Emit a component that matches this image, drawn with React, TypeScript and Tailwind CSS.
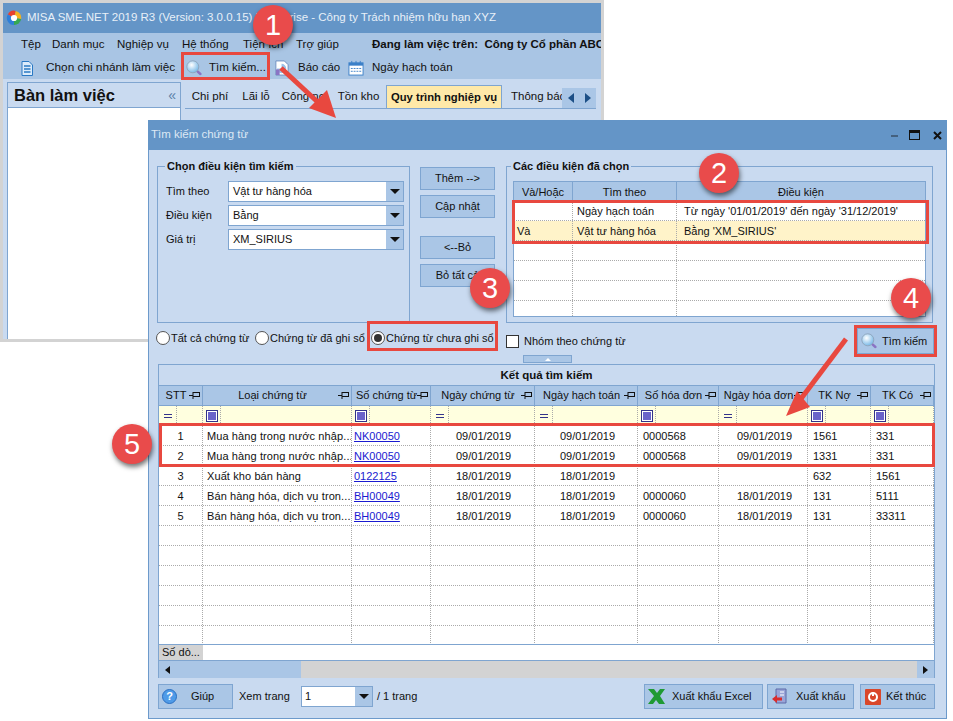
import { ReactNode } from 'react';

const font = 'font-["Liberation_Sans",sans-serif]';

const SearchIcon = ({ size = 20 }: { size?: number }) => (
  <svg width={size} height={size} viewBox="0 0 20 20" className="shrink-0">
    <defs>
      <radialGradient id="lens" cx="0.4" cy="0.35" r="0.7">
        <stop offset="0" stopColor="#ffffff" />
        <stop offset="1" stopColor="#6fb4e6" />
      </radialGradient>
    </defs>
    <path d="M13 13l5 4.500" stroke="#8a74c4" strokeWidth="3" strokeLinecap="round" />
    <circle cx="8.500" cy="8.500" r="7.500" fill="url(#lens)" stroke="#8fa6bd" strokeWidth="1.200" />
  </svg>
);

const Pin = () => (
  <svg width="11" height="9" viewBox="0 0 11 9" className="shrink-0">
    <path d="M0 4.500h4M4 1v7M4 1.500h6.500M4 5.500h6.500M10.500 1v5" stroke="#111" strokeWidth="1" fill="none" />
  </svg>
);

const Caret = () => (
  <svg width="10" height="5" viewBox="0 0 10 5">
    <path d="M0 0h10L5 5z" fill="#111" />
  </svg>
);

const Combo = ({ value }: { value: string }) => (
  <div className="flex h-[21px] w-[176px] border border-[#7fa5d0] bg-white">
    <div className="flex-1 pl-[4px] leading-[18px] text-[#111]">{value}</div>
    <div className="flex w-[17px] items-center justify-center bg-[#aac6e6]">
      <Caret />
    </div>
  </div>
);

const Btn = ({ children, className = '' }: { children: ReactNode; className?: string }) => (
  <div className={`flex items-center justify-center border border-[#7ea5d1] bg-[#aac6e6] text-[#111] ${className}`}>
    {children}
  </div>
);

const Radio = ({ label, checked = false, className }: { label: string; checked?: boolean; className: string }) => (
  <div className={`flex items-center gap-[1px] whitespace-nowrap text-[#111] ${className}`}>
    <span className="flex h-[14px] w-[14px] items-center justify-center rounded-full border border-[#555] bg-white">
      {checked && <span className="h-[8px] w-[8px] rounded-full bg-[#333]" />}
    </span>
    {label}
  </div>
);

const condCols = ['w-[59px]', 'w-[104px]', 'flex-1'];
const condRows = [
  ['', 'Ngày hạch toán', "Từ ngày '01/01/2019' đến ngày '31/12/2019'"],
  ['Và', 'Vật tư hàng hóa', "Bằng 'XM_SIRIUS'"],
  ['', '', ''],
  ['', '', ''],
  ['', '', ''],
  ['', '', ''],
];

const cols = [
  { w: 'w-[44px]', label: 'STT', align: 'text-center' },
  { w: 'w-[149px]', label: 'Loại chứng từ', align: 'pl-[4px] tracking-[0.1px]' },
  { w: 'w-[79px]', label: 'Số chứng từ', align: 'pl-[2px]' },
  { w: 'w-[104px]', label: 'Ngày chứng từ', align: 'pl-[25px]' },
  { w: 'w-[103px]', label: 'Ngày hạch toán', align: 'pl-[25px]' },
  { w: 'w-[81px]', label: 'Số hóa đơn', align: 'pl-[5px]' },
  { w: 'w-[89px]', label: 'Ngày hóa đơn', align: 'pl-[18px]' },
  { w: 'w-[63px]', label: 'TK Nợ', align: 'pl-[5px]' },
  { w: 'w-[63px]', label: 'TK Có', align: 'pl-[5px]' },
];

const filters = ['eq', 'box', 'box', 'eq', 'eq', 'box', 'eq', 'box', 'box'];

const rows = [
  ['1', 'Mua hàng trong nước nhập...', 'NK00050', '09/01/2019', '09/01/2019', '0000568', '09/01/2019', '1561', '331'],
  ['2', 'Mua hàng trong nước nhập...', 'NK00050', '09/01/2019', '09/01/2019', '0000568', '09/01/2019', '1331', '331'],
  ['3', 'Xuất kho bán hàng', '0122125', '18/01/2019', '18/01/2019', '', '', '632', '1561'],
  ['4', 'Bán hàng hóa, dịch vụ tron...', 'BH00049', '18/01/2019', '18/01/2019', '0000060', '18/01/2019', '131', '5111'],
  ['5', 'Bán hàng hóa, dịch vụ tron...', 'BH00049', '18/01/2019', '18/01/2019', '0000060', '18/01/2019', '131', '33311'],
  ...Array.from({ length: 6 }, () => ['', '', '', '', '', '', '', '', '']),
];

const Badge = ({ n, className }: { n: number; className: string }) => (
  <div
    className={`absolute flex h-[40px] w-[40px] items-center justify-center rounded-full bg-[#e94b4b] text-[29px] leading-none text-white shadow-[1px_3px_5px_rgba(0,0,0,0.55)] ${className}`}
  >
    {n}
  </div>
);

const RedBox = ({ className }: { className: string }) => (
  <div className={`absolute border-[3px] border-[#e8483f] ${className}`} />
);

const MainWindow = () => (
  <div className="absolute top-0 left-0 h-[342px] w-[604px] border-[3px] border-[#d3d3d3] bg-[#c9daf0] text-[11.5px]">
    <div className="flex h-[30px] items-center gap-[5px] bg-[#6495c7] pl-[3px] text-[11.5px] text-[#e8f0f8]">
      <svg width="16" height="16" viewBox="0 0 18 18">
        <path d="M9 9L2 5a8 8 0 0 1 9-4z" fill="#e8402e" />
        <path d="M9 9l2-8a8 8 0 0 1 6 9z" fill="#f4b31f" />
        <path d="M9 9l8 1a8 8 0 0 1-8 7z" fill="#35a853" />
        <path d="M9 9v8A8 8 0 0 1 2 5z" fill="#2f7fd8" />
        <circle cx="9" cy="9" r="3.500" fill="#fff" />
      </svg>
      <span className="whitespace-nowrap">MISA SME.NET 2019 R3 (Version: 3.0.0.15) Enterprise - Công ty Trách nhiệm hữu hạn XYZ</span>
    </div>
    <div className="h-[46px] bg-[#a9c5e4] text-[#111]">
      <div className="flex h-[24px] items-center overflow-hidden whitespace-nowrap pl-[18px]">
        <span className="w-[31px] shrink-0">Tệp</span>
        <span className="w-[65px] shrink-0">Danh mục</span>
        <span className="w-[65px] shrink-0">Nghiệp vụ</span>
        <span className="w-[61px] shrink-0">Hệ thống</span>
        <span className="w-[53px] shrink-0">Tiện ích</span>
        <span className="w-[76px] shrink-0">Trợ giúp</span>
        <span className="font-bold">Đang làm việc trên:&nbsp; Công ty Cổ phần ABC</span>
      </div>
      <div className="flex h-[22px] items-center whitespace-nowrap pl-[18px]">
        <svg width="12" height="15" viewBox="0 0 12 15" className="mr-[13px] shrink-0">
          <path d="M1 .5h7l3.500 3.500v10.500H1z" fill="#dcecfb" stroke="#2a79c4" />
          <path d="M3 5h6.500M3 8h6.500M3 11h6.500" stroke="#2a79c4" strokeWidth="1.500" />
        </svg>
        <span className="w-[140px] shrink-0 text-[11.8px]">Chọn chi nhánh làm việc</span>
        <SearchIcon size={16} />
        <span className="ml-[7px] w-[65px] shrink-0">Tìm kiếm...</span>
        <svg width="16" height="16" viewBox="0 0 17 17" className="mr-[8px] shrink-0">
          <path d="M2 1h9l4 4v11H2z" fill="#fff" stroke="#6f8fc0" />
          <path d="M8 9V4a5 5 0 1 1-5 5z" fill="#9cc4ea" />
          <path d="M2 10h4v6H2z" fill="#8a74c4" />
        </svg>
        <span className="w-[50px] shrink-0">Báo cáo</span>
        <svg width="16" height="16" viewBox="0 0 17 17" className="mr-[8px] shrink-0">
          <rect x="1" y="3" width="15" height="13" fill="#fff" stroke="#3c80c8" />
          <rect x="1" y="3" width="15" height="3" fill="#3c80c8" />
          <path d="M4 1v4M8.500 1v4M13 1v4" stroke="#3c80c8" />
          <path d="M3 9h11M3 12h11" stroke="#3c80c8" strokeDasharray="2 1" />
        </svg>
        <span>Ngày hạch toán</span>
      </div>
    </div>
    <div className="flex pt-[3px] pl-[4px]">
      <div className="h-[257px] w-[174px] border border-b-0 border-[#7fa5d0] bg-white">
        <div className="flex h-[25px] items-center justify-between border-b border-[#7fa5d0] bg-[#c9daf0] pr-[4px] pl-[6px] text-[16.500px] font-bold text-[#111]">
          Bàn làm việc
          <span className="text-[14px] font-normal text-[#5b7fa8]">«</span>
        </div>
      </div>
      <div className="ml-[4px] pt-[3px]">
        <div className="flex h-[24px] w-[411px] items-stretch border-b border-[#7fa5d0] text-[#111]">
          <span className="flex w-[50px] items-center justify-center">Chi phí</span>
          <span className="flex w-[42px] items-center justify-center">Lãi lỗ</span>
          <span className="flex w-[54px] items-center justify-center">Công nợ</span>
          <span className="flex w-[55px] items-center justify-center">Tồn kho</span>
          <span className="-mb-px flex w-[116px] items-center justify-center border border-[#7fa5d0] bg-[#ffe9a8] text-[11.250px] font-bold whitespace-nowrap">
            Quy trình nghiệp vụ
          </span>
          <span className="flex flex-1 items-center overflow-hidden pl-[9px] whitespace-nowrap">Thông báo</span>
          <span className="flex h-[20px] w-[34px] items-center justify-around self-end bg-[#aac6e6]">
            <svg width="6" height="10" viewBox="0 0 6 10"><path d="M6 0v10L0 5z" fill="#1c4f86" /></svg>
            <svg width="6" height="10" viewBox="0 0 6 10"><path d="M0 0v10l6-5z" fill="#1c4f86" /></svg>
          </span>
        </div>
      </div>
    </div>
  </div>
);

const SearchDialog = () => (
  <div className="absolute top-[120px] left-[148px] flex h-[599px] w-[799px] flex-col border border-[#6d9acb] bg-[#c9daf0] text-[11px] text-[#111]">
    <div className="-mx-px -mt-px flex h-[30px] shrink-0 items-center bg-[#6495c7] pl-[3px] text-[11.500px] text-[#dce8f4]">
      <span className="flex-1">Tìm kiếm chứng từ</span>
      <span className="mt-[1px] mr-[11px] h-[2px] w-[7px] bg-[#44617f]" />
      <span className="mr-[13px] h-[10px] w-[11px] border border-t-[3px] border-[#111]" />
      <svg width="9" height="9" viewBox="0 0 9 9" className="mr-[5px]"><path d="M1 1l7 7M8 1L1 8" stroke="#111" strokeWidth="2" /></svg>
    </div>

    <div className="flex px-[8px] pt-[16px]">
      {/* Chọn điều kiện */}
      <div className="relative h-[157px] w-[253px] border border-[#7fa5d0] pt-[14px] pl-[8px]">
        <span className="absolute -top-[9px] left-[7px] bg-[#c9daf0] px-[2px] font-bold">Chọn điều kiện tìm kiếm</span>
        <div className="flex flex-col gap-[3px]">
          <div className="flex items-center"><span className="w-[62px]">Tìm theo</span><Combo value="Vật tư hàng hóa" /></div>
          <div className="flex items-center"><span className="w-[62px]">Điều kiện</span><Combo value="Bằng" /></div>
          <div className="flex items-center"><span className="w-[62px]">Giá trị</span><Combo value="XM_SIRIUS" /></div>
        </div>
      </div>

      {/* Nút giữa */}
      <div className="mt-[1px] ml-[10px] flex w-[75px] flex-col">
        <Btn className="h-[23px]">Thêm --&gt;</Btn>
        <Btn className="mt-[5px] h-[23px]">Cập nhật</Btn>
        <Btn className="mt-[18px] h-[23px]">&lt;--Bỏ</Btn>
        <Btn className="mt-[5px] h-[23px]">Bỏ tất cả</Btn>
      </div>

      {/* Các điều kiện */}
      <div className="relative ml-[11px] h-[157px] w-[427px] border border-[#7fa5d0] px-[6px] pt-[14px]">
        <span className="absolute -top-[9px] left-[4px] bg-[#c9daf0] px-[2px] font-bold">Các điều kiện đã chọn</span>
        <div className="h-[136px] border border-[#7fa5d0] bg-white">
          <div className="flex h-[19px] bg-[#aac6e6]">
            <span className="w-[59px] border-r border-[#7fa5d0] text-center leading-[20px]">Và/Hoặc</span>
            <span className="w-[104px] border-r border-[#7fa5d0] text-center leading-[20px]">Tìm theo</span>
            <span className="flex-1 text-center leading-[20px]">Điều kiện</span>
          </div>
          {condRows.map((row, i) => (
            <div key={i} className={`flex border-b border-dotted border-[#aaa] ${i === 1 ? 'bg-[#fff3c9]' : ''} ${i === 5 ? 'h-[15px] border-b-0' : 'h-[20px]'}`}>
              {row.map((cell, j) => (
                <span key={j} className={`${condCols[j]} border-dotted border-[#aaa] leading-[21px] whitespace-nowrap ${j < 2 ? 'border-r' : ''} ${j === 0 ? 'pl-[3px]' : j === 1 ? 'pl-[4px]' : 'pl-[7px]'}`}>
                  {cell}
                </span>
              ))}
            </div>
          ))}
        </div>
      </div>
    </div>

    <div className="flex h-[32px] shrink-0 items-start pl-[7px]">
      <div className="mt-[7px] flex w-[350px]">
        <Radio label="Tất cả chứng từ" className="w-[99px]" />
        <Radio label="Chứng từ đã ghi sổ" className="w-[116px]" />
        <Radio label="Chứng từ chưa ghi sổ" checked className="w-[135px]" />
      </div>
      <div className="mt-[10px] flex items-center gap-[5px]">
        <span className="h-[13px] w-[13px] border border-[#333] bg-white" />
        Nhóm theo chứng từ
      </div>
      <Btn className="mt-[5px] mr-[12px] ml-auto h-[26px] w-[77px] justify-start gap-[5px] pl-[3px]">
        <SearchIcon size={16} />
        Tìm kiếm
      </Btn>
    </div>

    {/* Kết quả */}
    <div className="ml-[374px] flex h-[8px] w-[49px] shrink-0 items-center justify-center border border-[#7fa5d0] bg-[#aac6e6]">
      <span className="h-0 w-0 border-x-[3px] border-b-[3px] border-x-transparent border-b-white" />
    </div>
    <div className="mt-[1px] ml-[9px] flex h-[314px] w-[777px] shrink-0 flex-col border border-[#7fa5d0] bg-white">
      <div className="h-[20px] shrink-0 bg-[#c9daf0] text-center text-[11.500px] leading-[20px] font-bold">Kết quả tìm kiếm</div>
      <div className="flex h-[21px] shrink-0 border-y border-[#7fa5d0] bg-[#aac6e6]">
        {cols.map(c => (
          <div key={c.label} className={`${c.w} flex shrink-0 items-center border-r border-[#7fa5d0] pr-[2px] pl-[4px]`}>
            <span className="flex-1 text-center whitespace-nowrap">{c.label}</span>
            <Pin />
          </div>
        ))}
      </div>
      <div className="flex h-[19px] shrink-0 bg-[#ffffdf]">
        {cols.map((c, i) => (
          <div key={c.label} className={`${c.w} flex shrink-0 border-r border-dotted border-[#aaa]`}>
            <div className="flex w-[18px] items-center justify-center border-r border-dotted border-[#aaa]">
              {filters[i] === 'eq' ? (
                <span className="h-[4px] w-[8px] border-y border-[#33338a]" />
              ) : (
                <span className="flex h-[12px] w-[12px] items-center justify-center border border-[#33338a] bg-white">
                  <span className="h-[8px] w-[8px] bg-[#6a63c9]" />
                </span>
              )}
            </div>
          </div>
        ))}
      </div>
      <div className="h-[219px] shrink-0 overflow-hidden">
        {rows.map((row, r) => (
          <div key={r} className="flex h-[20px] border-t border-dotted border-[#aaa]">
            {row.map((cell, i) => (
              <div key={i} className={`${cols[i].w} ${cols[i].align} shrink-0 overflow-hidden border-r border-dotted border-[#aaa] leading-[21px] whitespace-nowrap ${i === 2 ? 'text-[#1a1ad0] underline' : ''}`}>
                {cell}
              </div>
            ))}
          </div>
        ))}
      </div>
      <div className="flex h-[16px] shrink-0 border-t border-[#7fa5d0]">
        <div className="w-[44px] bg-[#d3d3d3] pl-[3px] leading-[15px]">Số dò...</div>
      </div>
      <div className="flex h-[18px] shrink-0 border-t border-[#7fa5d0] bg-[#d3d3d3]">
        <div className="flex w-[142px] items-center bg-[#aac6e6] pl-[6px]">
          <svg width="5" height="8" viewBox="0 0 5 8"><path d="M5 0v8L0 4z" fill="#111" /></svg>
        </div>
        <div className="flex-1" />
        <div className="flex w-[17px] items-center justify-center bg-[#aac6e6]">
          <svg width="5" height="8" viewBox="0 0 5 8"><path d="M0 0v8l5-4z" fill="#111" /></svg>
        </div>
      </div>
    </div>

    <div className="mt-[6px] flex items-center pr-[11px] pl-[9px]">
      <Btn className="h-[25px] w-[75px] justify-start pl-[3px]">
        <span className="flex h-[15px] w-[15px] items-center justify-center rounded-full border border-[#2a6fc2] bg-[#4f9be8] text-[11px] font-bold text-white">?</span>
        <span className="ml-[14px]">Giúp</span>
      </Btn>
      <span className="ml-[6px] w-[62px]">Xem trang</span>
      <div className="flex h-[21px] w-[72px] border border-[#7fa5d0] bg-white">
        <span className="flex-1 pl-[3px] leading-[18px]">1</span>
        <span className="flex w-[17px] items-center justify-center bg-[#aac6e6]"><Caret /></span>
      </div>
      <span className="ml-[4px]">/ 1 trang</span>
      <Btn className="ml-auto h-[25px] w-[119px] justify-start pl-[3px]">
        <svg width="17" height="15" viewBox="0 0 17 15">
          <path d="M0 0h6l3 4 3-4h5l-5 7 5 8h-6l-3-4-3 4H0l6-8z" fill="#1f9a34" />
        </svg>
        <span className="ml-[7px]">Xuất khẩu Excel</span>
      </Btn>
      <Btn className="ml-[4px] h-[25px] w-[87px] justify-start pl-[4px]">
        <svg width="16" height="17" viewBox="0 0 16 17">
          <path d="M4 1h10v14H4z" fill="#9aa5d8" stroke="#5d6aa8" />
          <path d="M8 4h4M8 7h4" stroke="#fff" />
          <path d="M0 11l5-4v2.500h5v3H5V15z" fill="#d92c2c" />
        </svg>
        <span className="ml-[8px]">Xuất khẩu</span>
      </Btn>
      <Btn className="ml-[6px] h-[25px] w-[75px] justify-start pl-[4px]">
        <svg width="16" height="16" viewBox="0 0 16 16">
          <rect width="16" height="16" rx="1" fill="#d9472b" />
          <circle cx="8" cy="8" r="4" fill="none" stroke="#fff" strokeWidth="2" />
          <path d="M8 3v4" stroke="#fff" strokeWidth="2" />
        </svg>
        <span className="ml-[5px]">Kết thúc</span>
      </Btn>
    </div>
  </div>
);

export default function App() {
  return (
    <div className={`relative h-[721px] w-[953px] overflow-hidden bg-white ${font}`}>
      <MainWindow />
      <SearchDialog />

      {/* Chú thích */}
      <RedBox className="top-[52px] left-[181px] h-[28px] w-[89px]" />
      <RedBox className="top-[200px] left-[512px] h-[44px] w-[417px]" />
      <RedBox className="top-[321px] left-[367px] h-[30px] w-[131px]" />
      <RedBox className="top-[325px] left-[854px] h-[32px] w-[83px]" />
      <RedBox className="top-[423px] left-[159px] h-[44px] w-[776px]" />
      <svg className="pointer-events-none absolute top-0 left-0" width="953" height="721" viewBox="0 0 953 721">
        <path d="M281 68L322 106" stroke="#e8483f" strokeWidth="5" />
        <path d="M336 118L309 108L327 90z" fill="#e8483f" />
        <path d="M846 339L800 400" stroke="#e8483f" strokeWidth="5" />
        <path d="M786 416L797 391L810 407z" fill="#e8483f" />
      </svg>
      <Badge n={1} className="top-[5px] left-[253px]" />
      <Badge n={2} className="top-[153px] left-[699px]" />
      <Badge n={3} className="top-[268px] left-[470px]" />
      <Badge n={4} className="top-[278px] left-[891px]" />
      <Badge n={5} className="top-[424px] left-[112px]" />
    </div>
  );
}
